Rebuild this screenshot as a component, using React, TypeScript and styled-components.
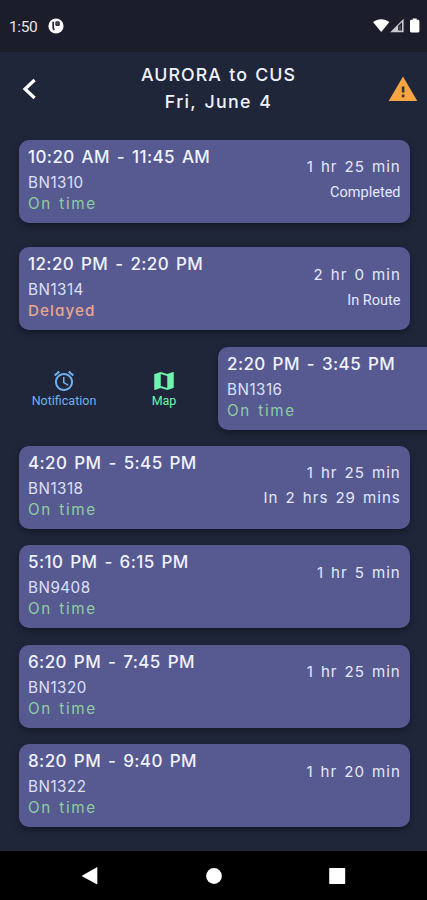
import React from "react";
import styled, { createGlobalStyle } from "styled-components";

const GlobalStyle = createGlobalStyle`
  * { box-sizing: border-box; }
  body { margin: 0; background: #20263a; }
`;

const Screen = styled.div`
  display: flex;
  flex-direction: column;
  width: 427px;
  height: 900px;
  overflow: hidden;
  background: #20263a;
  color: #f0f2ff;
  font-family: Inter, "Liberation Sans", sans-serif;
  font-feature-settings: "cv11", "calt" 0;
`;

const StatusBar = styled.div`
  display: flex;
  align-items: center;
  height: 52px;
  padding: 0 6px 0 9px;
  background: #1c1d2b;
`;

const Clock = styled.span`
  width: 39px;
  padding-top: 1px;
  font: 400 15.5px/20px Roboto, sans-serif;
  letter-spacing: -0.4px;
  color: #e4e4e8;
`;

const StatusIcons = styled.div`
  display: flex;
  margin-left: auto;
`;

const Header = styled.header`
  display: grid;
  grid-template-columns: 60px 1fr 60px;
  height: 87.5px;
  padding-top: 9px;
`;

const BackButton = styled.button`
  display: flex;
  height: 56px;
  padding: 0 0 0 22px;
  align-items: center;
  border: 0;
  background: none;
`;

const Titles = styled.div`
  display: flex;
  flex-direction: column;
  align-items: center;
  padding-left: 10px;
`;

const Title = styled.div<{ $spacing: number }>`
  height: 27px;
  font-size: 17.8px;
  font-weight: 500;
  line-height: 27px;
  letter-spacing: ${(p) => p.$spacing}px;
  word-spacing: 1.5px;
  white-space: nowrap;
`;

const AlertSlot = styled.div`
  padding: 15px 0 0 21px;
`;

const List = styled.main`
  display: flex;
  flex: 1;
  flex-direction: column;
  gap: 16.4px;
`;

const Card = styled.article`
  display: flex;
  flex: none;
  justify-content: space-between;
  width: 390.5px;
  height: 83px;
  margin-left: 19px;
  padding: 0 9px;
  border-radius: 10px;
  background: #565a91;
  box-shadow: 0 3px 6px rgba(10, 12, 24, 0.5);

  &:first-child {
    margin-bottom: 8.3px;
  }
`;

const SwipedRow = styled.div`
  display: flex;
  flex: none;
  height: 83px;

  ${Card} {
    margin: 0;
  }
`;

const Spacer = styled.div`
  flex: none;
  width: 18px;
`;

const Action = styled.button<{ $color: string; $width: number }>`
  display: flex;
  flex: none;
  flex-direction: column;
  align-items: center;
  width: ${(p) => p.$width}px;
  padding: 22px 0 0;
  border: 0;
  background: none;
  color: ${(p) => p.$color};
  font: 400 12.5px/15px Roboto, sans-serif;
`;

const Details = styled.div`
  white-space: nowrap;
`;

const Times = styled.div`
  height: 30px;
  font-size: 17px;
  font-weight: 500;
  line-height: 34.4px;
  letter-spacing: 0.4px;
  word-spacing: 2px;
`;

const Train = styled.div`
  height: 22px;
  font-size: 15.2px;
  line-height: 26px;
  letter-spacing: 0.5px;
  color: #dde0fb;
`;

const Punctuality = styled.div<{ $late: boolean }>`
  font-size: 15.2px;
  font-weight: ${(p) => (p.$late ? 500 : 400)};
  line-height: 23px;
  letter-spacing: ${(p) => (p.$late ? 1.1 : 1.65)}px;
  word-spacing: 1.5px;
  color: ${(p) => (p.$late ? "#eaa78e" : "#8fcda2")};
`;

const Trip = styled.div`
  padding-top: 14.5px;
  text-align: right;
  white-space: nowrap;
  color: #e4e7ff;
`;

const Duration = styled.div`
  height: 25px;
  margin-right: -0.3px;
  font-size: 15.1px;
  line-height: 25px;
  letter-spacing: 1px;
  word-spacing: 1.8px;
`;

const Progress = styled.div`
  font: 400 14.5px/27px Roboto, sans-serif;
`;

const NavBar = styled.nav`
  display: flex;
  align-items: center;
  flex: none;
  height: 49px;
  padding: 0 81px;
  justify-content: space-between;
  background: #000;
`;

type Departure = {
  times: string;
  train: string;
  late?: boolean;
  duration?: string;
  progress?: string;
  countdown?: string;
  swiped?: boolean;
};

const departures: Departure[] = [
  { times: "10:20 AM - 11:45 AM", train: "BN1310", duration: "1 hr 25 min", progress: "Completed" },
  { times: "12:20 PM - 2:20 PM", train: "BN1314", late: true, duration: "2 hr 0 min", progress: "In Route" },
  { times: "2:20 PM - 3:45 PM", train: "BN1316", swiped: true },
  { times: "4:20 PM - 5:45 PM", train: "BN1318", duration: "1 hr 25 min", countdown: "In 2 hrs 29 mins" },
  { times: "5:10 PM - 6:15 PM", train: "BN9408", duration: "1 hr 5 min" },
  { times: "6:20 PM - 7:45 PM", train: "BN1320", duration: "1 hr 25 min" },
  { times: "8:20 PM - 9:40 PM", train: "BN1322", duration: "1 hr 20 min" },
];

function DepartureCard({ item }: { item: Departure }) {
  return (
    <Card>
      <Details>
        <Times>{item.times}</Times>
        <Train>{item.train}</Train>
        <Punctuality $late={!!item.late}>{item.late ? "Delayed" : "On time"}</Punctuality>
      </Details>
      <Trip>
        {item.duration && <Duration>{item.duration}</Duration>}
        {item.progress && <Progress>{item.progress}</Progress>}
        {item.countdown && <Duration>{item.countdown}</Duration>}
      </Trip>
    </Card>
  );
}

export default function App() {
  return (
    <Screen>
      <GlobalStyle />
      <StatusBar>
        <Clock>1:50</Clock>
        <svg width="16" height="16" viewBox="0 0 16 16">
          <circle cx="8" cy="8" r="7.6" fill="#fff" />
          <path d="M5.2 3.7v5.3c0 1.2.3 2.2.8 3" fill="none" stroke="#1c1d2b" strokeWidth="1.7" />
          <path d="M7.9 3.9h3.3v3.5H7.9z" fill="#55566a" stroke="#1c1d2b" strokeWidth="1" />
        </svg>
        <StatusIcons>
          <svg width="48" height="16" viewBox="0 0 48 16">
            <path d="M0 4.1C4.6.2 11.8.2 16.4 4.1L8.2 14z" fill="#fff" />
            <path d="M17.2 14.2L30.6.8v13.4z" fill="#c8c8cd" />
            <path d="M25.2 12.5V7.8l3.8-3.6v8.3z" fill="#1c1d2b" />
            <path d="M26.2 12v-4l1.8-1.6V12z" fill="#48495a" />
            <path d="M39.7 1.8V.5h4v1.3h1.4c.8 0 1.3.6 1.3 1.4v9.9c0 .8-.5 1.4-1.3 1.4h-6.8c-.8 0-1.3-.6-1.3-1.4V3.2c0-.8.5-1.4 1.3-1.4z" fill="#fff" />
          </svg>
        </StatusIcons>
      </StatusBar>
      <Header>
        <BackButton aria-label="Back">
          <svg width="15" height="22" viewBox="0 0 15 22">
            <path d="M12.6 2L3 11l9.6 9" fill="none" stroke="#fff" strokeWidth="3.2" />
          </svg>
        </BackButton>
        <Titles>
          <Title $spacing={1.05}>AURORA to CUS</Title>
          <Title $spacing={1.3}>Fri, June 4</Title>
        </Titles>
        <AlertSlot>
          <svg width="30" height="26" viewBox="0 0 30 26">
            <path d="M15 .5L29.3 25H.7z" fill="#f6a545" />
            <path d="M13.8 10.5h2.6v6h-2.6zM13.8 18.6h2.6v2.6h-2.6z" fill="#3b342c" />
          </svg>
        </AlertSlot>
      </Header>
      <List>
        {departures.map((item) =>
          item.swiped ? (
            <SwipedRow key={item.train}>
              <Action $color="#70b0ee" $width={128}>
                <svg width="24" height="24" viewBox="0 0 24 24" fill="currentColor">
                  <path d="M22 5.72l-4.6-3.86-1.29 1.53 4.6 3.86L22 5.72zM7.88 3.39L6.6 1.86 2 5.71l1.29 1.53 4.59-3.85zM12.5 8H11v6l4.75 2.85.75-1.23-4-2.37V8zM12 4c-4.97 0-9 4.03-9 9s4.02 9 9 9c4.97 0 9-4.03 9-9s-4.03-9-9-9zm0 16c-3.87 0-7-3.13-7-7s3.13-7 7-7 7 3.13 7 7-3.13 7-7 7z" />
                </svg>
                Notification
              </Action>
              <Action $color="#70f3ae" $width={72}>
                <svg width="26" height="24" viewBox="0 0 24 24" fill="currentColor" preserveAspectRatio="none">
                  <path d="M20.5 3l-.16.03L15 5.1 9 3 3.36 4.9c-.21.07-.36.25-.36.48V20.5c0 .28.22.5.5.5l.16-.03L9 18.9l6 2.1 5.64-1.9c.21-.07.36-.25.36-.48V3.5c0-.28-.22-.5-.5-.5zM15 19l-6-2.11V5l6 2.11V19z" />
                </svg>
                Map
              </Action>
              <Spacer />
              <DepartureCard item={item} />
            </SwipedRow>
          ) : (
            <DepartureCard key={item.train} item={item} />
          )
        )}
      </List>
      <NavBar>
        <svg width="17" height="20" viewBox="0 0 17 20"><path d="M.5 10L16.3 1v17.6z" fill="#fff" /></svg>
        <svg width="16" height="16" viewBox="0 0 16 16"><circle cx="8" cy="8" r="7.9" fill="#fff" /></svg>
        <svg width="17" height="18" viewBox="0 0 17 18"><rect x=".2" y="1" width="16" height="16" rx=".8" fill="#fff" /></svg>
      </NavBar>
    </Screen>
  );
}
